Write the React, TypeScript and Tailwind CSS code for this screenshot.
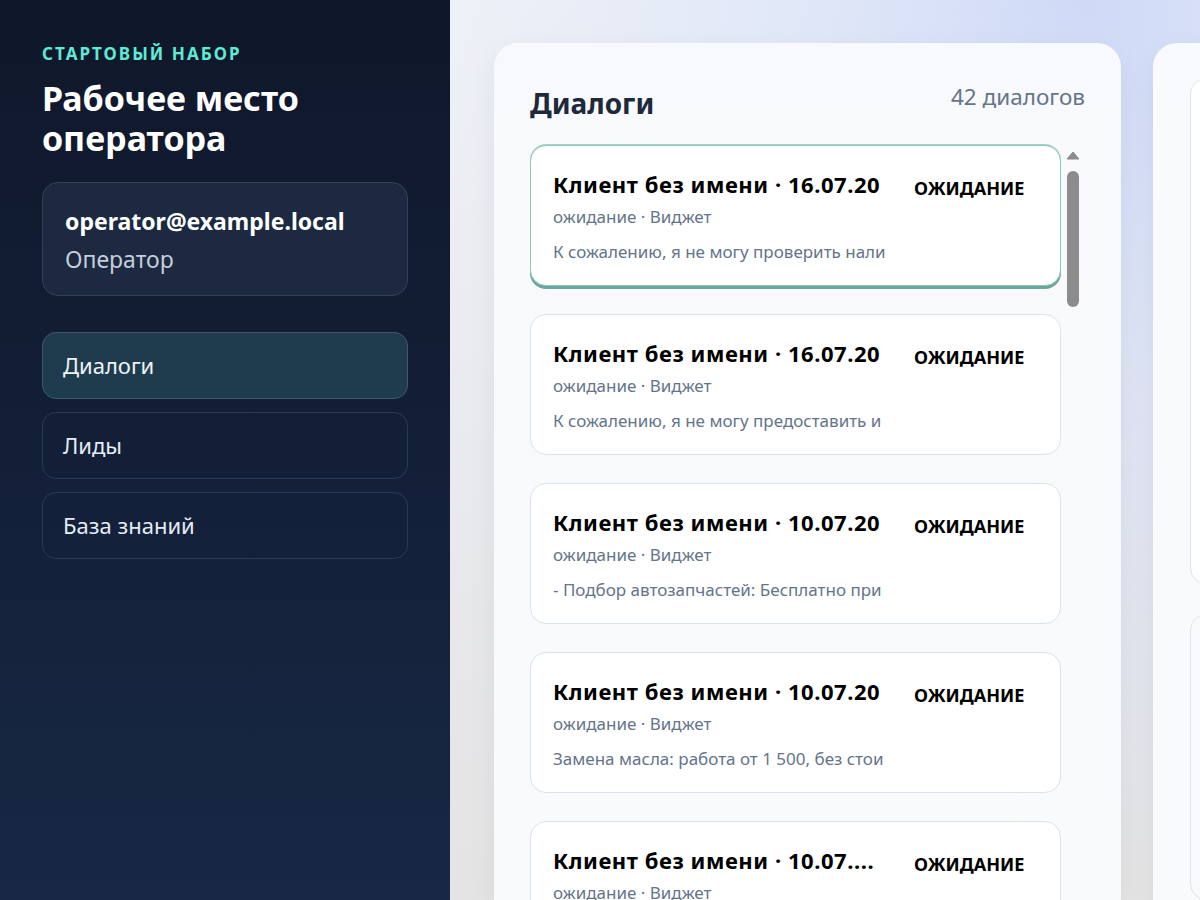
import React from 'react'

type Dialog = {
  title: string
  meta: string
  preview: string
  status: string
}

const dialogs: Dialog[] = [
  {
    title: 'Клиент без имени · 16.07.20',
    meta: 'ожидание · Виджет',
    preview: 'К сожалению, я не могу проверить нали',
    status: 'ОЖИДАНИЕ',
  },
  {
    title: 'Клиент без имени · 16.07.20',
    meta: 'ожидание · Виджет',
    preview: 'К сожалению, я не могу предоставить и',
    status: 'ОЖИДАНИЕ',
  },
  {
    title: 'Клиент без имени · 10.07.20',
    meta: 'ожидание · Виджет',
    preview: '- Подбор автозапчастей: Бесплатно при',
    status: 'ОЖИДАНИЕ',
  },
  {
    title: 'Клиент без имени · 10.07.20',
    meta: 'ожидание · Виджет',
    preview: 'Замена масла: работа от 1 500, без стои',
    status: 'ОЖИДАНИЕ',
  },
  {
    title: 'Клиент без имени · 10.07....',
    meta: 'ожидание · Виджет',
    preview: 'Здравствуйте! Чем могу помочь?',
    status: 'ОЖИДАНИЕ',
  },
]

const nav = ['Диалоги', 'Лиды', 'База знаний']

export default function App() {
  return (
    <div className="flex h-[900px] w-[1200px] overflow-hidden font-['Noto_Sans',sans-serif]">
      <aside className="flex w-[450px] shrink-0 flex-col bg-[linear-gradient(180deg,#0f172a_0%,#14213a_60%,#172744_100%)] px-[42px] pt-[42px]">
        <p className="text-[17px] font-bold uppercase leading-[24px] tracking-[0.12em] text-[#5eead4]">
          Стартовый набор
        </p>
        <h1 className="mt-[12px] text-[34px] font-bold leading-[40px] text-white">
          Рабочее место
          <br />
          оператора
        </h1>
        <div className="mt-[24px] rounded-[16px] border border-[#334158] bg-[#1c2940] px-[22px] pb-[21px] pt-[23px]">
          <p className="text-[23px] font-bold leading-[30px] text-white">operator@example.local</p>
          <p className="mt-[8px] text-[23px] leading-[30px] text-[#c5cfdc]">Оператор</p>
        </div>
        <nav className="mt-[36px] flex flex-col gap-[13px]">
          {nav.map((item, i) => (
            <div
              key={item}
              className={
                i === 0
                  ? 'flex h-[67px] items-center rounded-[14px] border border-[#3b5a6c] bg-[#1f3c4e] px-[20px] text-[22px] text-[#eef3f8]'
                  : 'flex h-[67px] items-center rounded-[14px] border border-[#2a3a55] px-[20px] text-[22px] text-[#e6ecf3]'
              }
            >
              {item}
            </div>
          ))}
        </nav>
      </aside>

      <main className="flex min-w-0 flex-1 gap-[32px] overflow-hidden bg-[radial-gradient(ellipse_at_85%_0%,#cfdaf7_0%,rgba(214,224,248,0.6)_30%,rgba(229,229,229,0)_70%),linear-gradient(180deg,#eef1f7_0%,#e9eaee_50%,#e4e4e4_100%)] pl-[44px] pt-[43px]">
        <section className="flex w-[627px] shrink-0 flex-col rounded-t-[24px] bg-[linear-gradient(180deg,#f7f9fc_0%,#f9fafb_100%)] px-[36px] pt-[36px] shadow-[0_10px_30px_rgba(30,41,59,0.06)]">
          <div className="flex items-start justify-between">
            <h2 className="text-[28px] font-bold leading-[48px] text-[#1e293b]">Диалоги</h2>
            <span className="mt-[3px] text-[22.5px] leading-[30px] text-[#64748b]">42 диалогов</span>
          </div>
          <div className="mt-[18px] flex">
            <ul className="flex w-[531px] shrink-0 flex-col gap-[28px]">
              {dialogs.map((d, i) => (
                <li
                  key={i}
                  className={
                    i === 0
                      ? 'flex h-[141px] rounded-[16px] border border-[#8fc6bc] bg-white pl-[22px] pt-[24px] shadow-[0_3px_0_#6ba69c,0_-1px_0_#a6d2ca]'
                      : 'flex h-[141px] rounded-[16px] border border-[#d9e3ee] bg-white pl-[22px] pt-[24px]'
                  }
                >
                  <div className="w-[336px] shrink-0 overflow-hidden whitespace-nowrap">
                    <p className="text-[22px] font-bold leading-[28px] tracking-[0.025em] text-black">{d.title}</p>
                    <p className="mt-[8px] text-[17px] leading-[22px] text-[#64748b]">{d.meta}</p>
                    <p className="mt-[13px] text-[17px] leading-[22px] text-[#64748b]">{d.preview}</p>
                  </div>
                  <span className="ml-[25px] mt-[6px] text-[18px] font-bold leading-[24px] text-black">
                    {d.status}
                  </span>
                </li>
              ))}
            </ul>
            <div className="flex w-[23px] flex-col items-center pt-[6px]">
              <svg width="14" height="9" viewBox="0 0 14 9">
                <path d="M7 1 L13 8 L1 8 Z" fill="#8b8b8b" strokeLinejoin="round" stroke="#8b8b8b" strokeWidth="1" />
              </svg>
              <div className="mt-[11px] h-[136px] w-[12px] rounded-full bg-[#8c8c8c]" />
            </div>
          </div>
        </section>

        <section className="flex w-[600px] shrink-0 flex-col gap-[30px] rounded-t-[24px] bg-[linear-gradient(180deg,#f8fafd_0%,#f9fafb_100%)] pl-[37px] pt-[35px] shadow-[0_10px_30px_rgba(30,41,59,0.06)]">
          <div className="h-[532px] rounded-[16px] border border-[#dde4ec] bg-white" />
          <div className="h-[300px] rounded-[16px] border border-[#dde4ec] bg-[#f7f9fc]" />
        </section>
      </main>
    </div>
  )
}
